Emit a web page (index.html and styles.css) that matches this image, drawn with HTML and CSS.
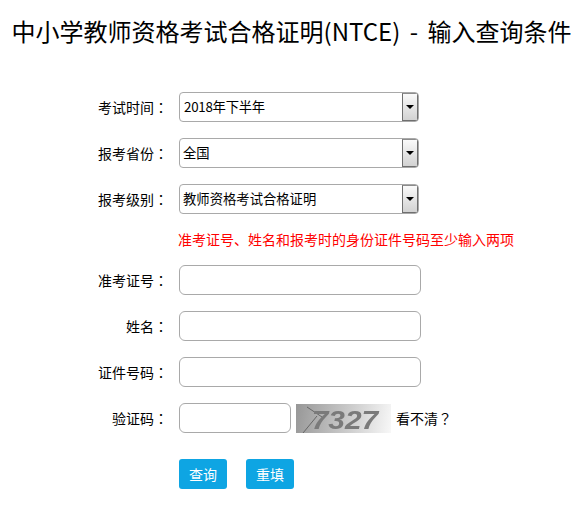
FILE: index.html
```html
<!DOCTYPE html>
<html lang="zh-CN">
<head>
<meta charset="utf-8">
<title>中小学教师资格考试合格证明(NTCE) - 输入查询条件</title>
<link rel="stylesheet" href="styles.css">
</head>
<body>
<h1 class="title">中小学教师资格考试合格证明(NTCE) - 输入查询条件</h1>
<form class="form">
  <label class="label">考试时间<span class="colon" lang="zh-TW">：</span></label>
  <div class="select">
    <span class="select-value year">2018年下半年</span>
    <span class="select-btn"><span class="arrow"></span></span>
  </div>
  <label class="label">报考省份<span class="colon" lang="zh-TW">：</span></label>
  <div class="select">
    <span class="select-value">全国</span>
    <span class="select-btn"><span class="arrow"></span></span>
  </div>
  <label class="label">报考级别<span class="colon" lang="zh-TW">：</span></label>
  <div class="select">
    <span class="select-value">教师资格考试合格证明</span>
    <span class="select-btn"><span class="arrow"></span></span>
  </div>
  <div class="notice">准考证号、姓名和报考时的身份证件号码至少输入两项</div>
  <label class="label">准考证号<span class="colon" lang="zh-TW">：</span></label>
  <input class="input" type="text">
  <label class="label">姓名<span class="colon" lang="zh-TW">：</span></label>
  <input class="input" type="text">
  <label class="label">证件号码<span class="colon" lang="zh-TW">：</span></label>
  <input class="input" type="text">
  <label class="label">验证码<span class="colon" lang="zh-TW">：</span></label>
  <div class="captcha-row">
    <input class="input input-code" type="text">
    <div class="captcha">
      <svg class="captcha-lines" width="95" height="29" viewBox="0 0 95 29"><path d="M11 3 L26 13 M21 12 L7 29" stroke="#666" stroke-width="1" fill="none"/></svg>
      <span class="captcha-text">7327</span>
    </div>
    <a class="refresh">看不清<span class="colon" lang="zh-TW">？</span></a>
  </div>
  <div class="buttons">
    <button class="btn" type="button">查询</button>
    <button class="btn" type="button">重填</button>
  </div>
</form>
</body>
</html>
```
FILE: styles.css
```css
html, body {
  margin: 0;
  padding: 0;
  background: #fff;
}
body {
  width: 583px;
  height: 508px;
  overflow: hidden;
  font-family: "Noto Sans CJK SC", "Liberation Sans", sans-serif;
  font-size: 14px;
  color: #000;
}
.title {
  margin: 0;
  padding-top: 14px;
  height: 92px;
  box-sizing: border-box;
  font-size: 24px;
  line-height: 34px;
  font-weight: 400;
  word-spacing: 4px;
  text-align: center;
  white-space: nowrap;
}
.form {
  display: grid;
  grid-template-columns: 168px 1fr;
  column-gap: 11px;
  row-gap: 16px;
  align-items: center;
}
.label {
  text-align: right;
  font-size: 14px;
  line-height: 30px;
}
.colon {
  font-family: "Noto Sans CJK TC", sans-serif;
}
.select {
  display: flex;
  width: 240px;
  height: 30px;
  box-sizing: border-box;
  border: 1px solid #a9a9a9;
  border-radius: 4px;
  background: #fff;
  overflow: hidden;
}
.select-value {
  flex: 1;
  padding-left: 3px;
  font-size: 13.33px;
  line-height: 28px;
}
.select-value.year {
  padding-left: 4px;
  letter-spacing: -0.25px;
}
.select-btn {
  display: flex;
  align-items: center;
  justify-content: center;
  width: 16px;
  box-sizing: border-box;
  border: 1px solid #6f6f6f;
  border-top-color: #8c8c8c;
  background: linear-gradient(#fafafa, #d2d2d2);
}
.arrow {
  width: 0;
  height: 0;
  border-left: 4px solid transparent;
  border-right: 4px solid transparent;
  border-top: 4px solid #000;
}
.notice {
  grid-column: 2;
  color: #f00;
  font-size: 14px;
  line-height: 19px;
  white-space: nowrap;
  margin-left: -1px;
}
.input {
  display: block;
  width: 242px;
  height: 30px;
  margin: 0;
  padding: 0 4px;
  box-sizing: border-box;
  border: 1px solid #a9a9a9;
  border-radius: 6px;
  background: #fff;
  outline: none;
}
.input-code {
  width: 112px;
}
.captcha-row {
  display: flex;
  align-items: center;
  gap: 5px;
}
.captcha {
  position: relative;
  display: flex;
  align-items: center;
  justify-content: center;
  width: 95px;
  height: 29px;
  background: linear-gradient(100deg, #979797, #d0d0d0 60%, #f8f8f8);
}
.captcha-lines {
  position: absolute;
  inset: 0;
}
.captcha-text {
  position: relative;
  left: 1px;
  top: 2px;
  font-family: "Liberation Sans", sans-serif;
  font-size: 26px;
  line-height: 24px;
  font-weight: 700;
  font-style: italic;
  color: #7a7a7a;
  transform: scaleX(1.15);
  filter: blur(0.6px);
}
.refresh {
  font-size: 14px;
}
.buttons {
  grid-column: 2;
  display: flex;
  gap: 19px;
  margin-top: 10px;
}
.btn {
  width: 48px;
  height: 30px;
  padding: 0;
  border: none;
  border-radius: 3px;
  background: #0ea5e3;
  color: #fff;
  font-family: inherit;
  font-size: 14px;
}
```
